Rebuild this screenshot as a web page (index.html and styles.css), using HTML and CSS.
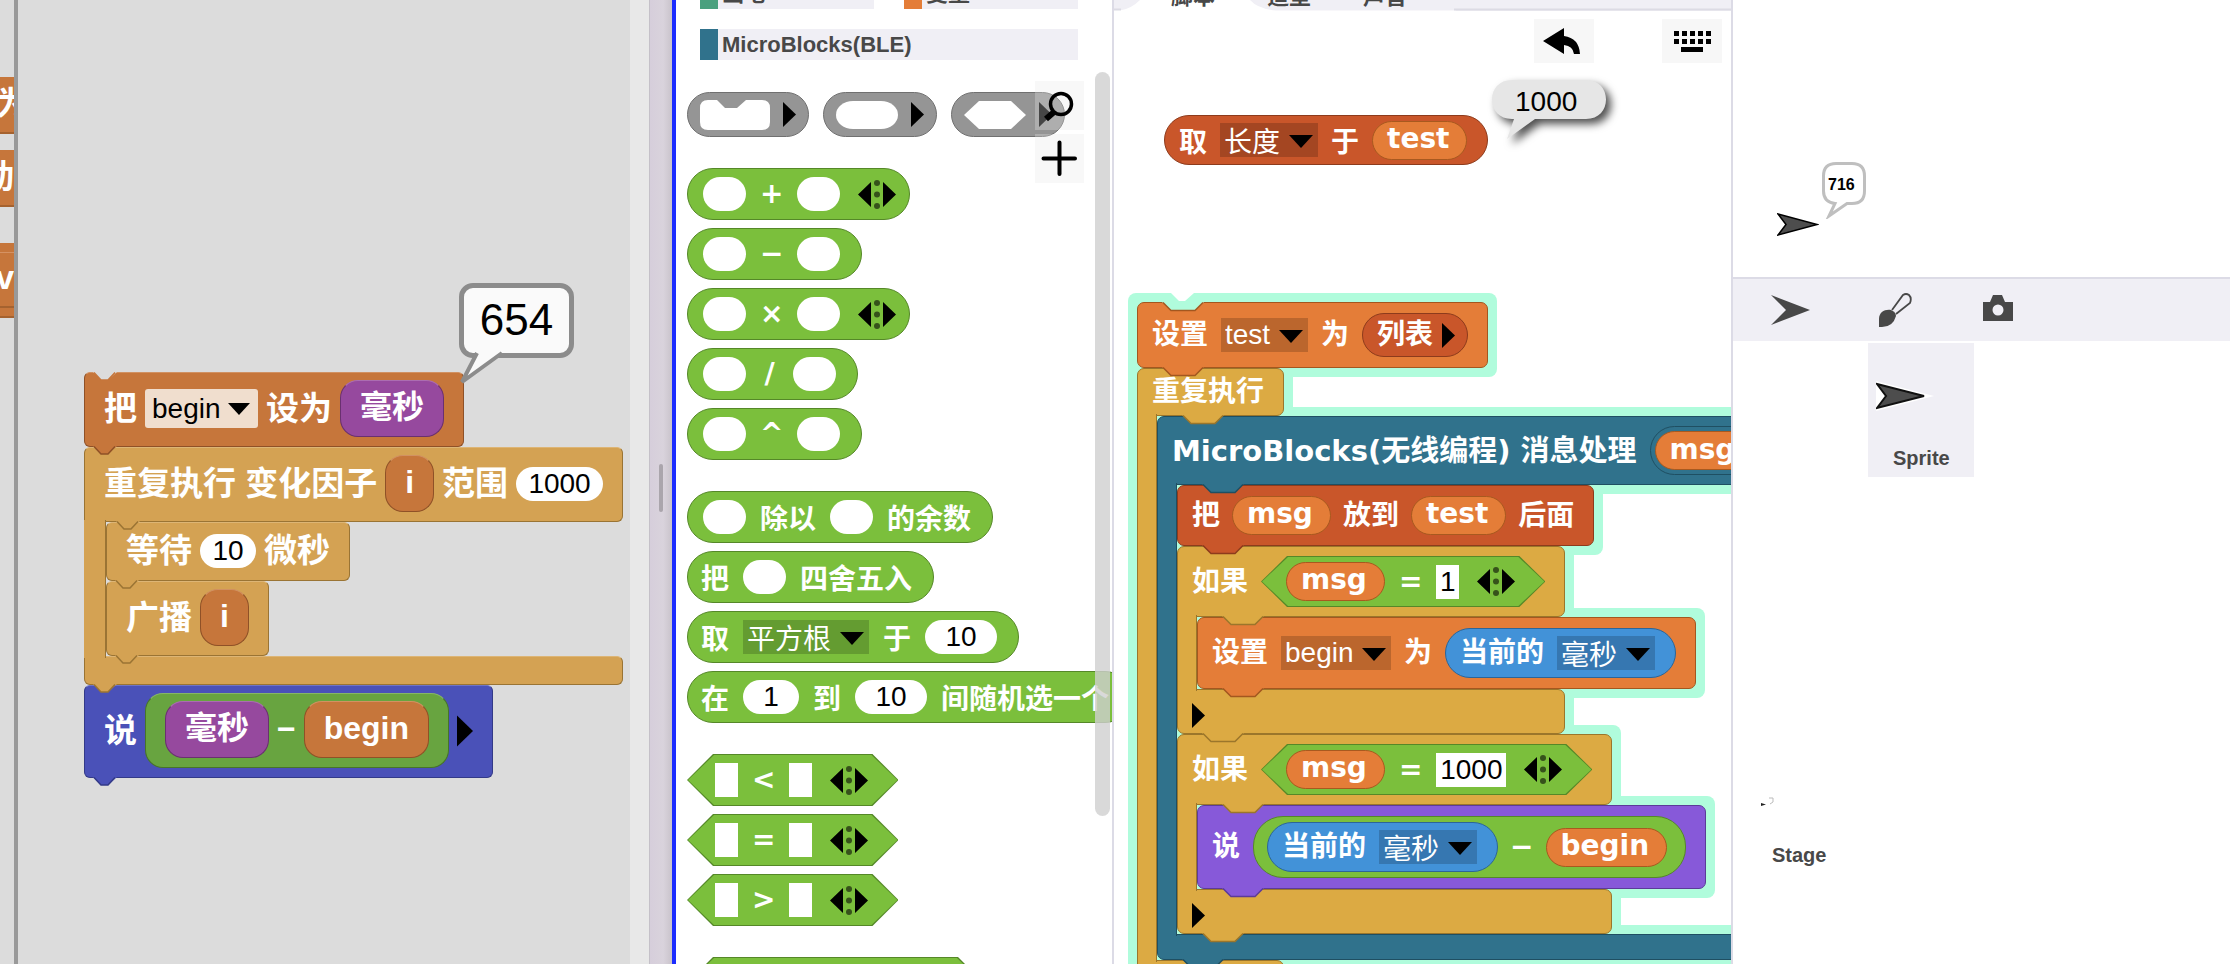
FILE: index.html
```html
<!DOCTYPE html>
<html lang="zh-CN">
<head>
<meta charset="utf-8">
<title>MicroBlocks BLE</title>
<link rel="stylesheet" href="styles.css">
</head>
<body>
<svg width="0" height="0" class="defs" aria-hidden="true">
  <symbol id="right" viewBox="0 0 13 25"><path d="M0 0L13 12.500L0 25Z"/></symbol>
  <symbol id="down" viewBox="0 0 24 13"><path d="M0 0H24L12 13Z"/></symbol>
  <symbol id="vary" viewBox="0 0 38 29"><path d="M13 2V27L0 14.500ZM25 2V27L38 14.500Z"/><g fill="#36521b"><circle cx="19" cy="3" r="3"/><circle cx="19" cy="14.500" r="3"/><circle cx="19" cy="26" r="3"/></g></symbol>
  <symbol id="tabwide" viewBox="0 0 42 10"><path d="M0 0H42L32 8.500H9Z"/><path d="M1 0.500L9 8.500H33L41 0.500" fill="none" class="edge"/></symbol>
  <symbol id="tabsmall" viewBox="0 0 24 9"><path d="M0 0H24L15 8H8Z"/><path d="M1 0.500L8 8H15L22 0.500" fill="none" class="edge"/></symbol>
</svg>
<div class="app">
  <aside class="strip">
    <div class="frag a"><span>为</span></div>
    <div class="frag b"><span>动</span></div>
    <div class="frag c3"><span>v</span></div>
  </aside>

  <section class="classic">
    <div class="script old">
      <div class="blk orange">
        <svg class="notch"><use href="#tabsmall"/></svg>
        <span>把</span><span class="dd light"><select aria-label="变量"><option>begin</option></select><svg><use href="#down"/></svg></span><span>设为</span><span class="rep violet">毫秒</span>
        <svg class="tab"><use href="#tabsmall"/></svg>
      </div>
      <div class="c yellow">
        <div class="blk head"><span>重复执行 变化因子</span><span class="rep orange">i</span><span>范围</span><input class="w87" value="1000" aria-label="范围"><svg class="tab"><use href="#tabsmall"/></svg></div>
        <div class="body"><div class="arm"></div><div class="stack">
          <div class="blk"><span>等待</span><input class="w56" value="10" aria-label="等待"><span>微秒</span><svg class="tab"><use href="#tabsmall"/></svg></div>
          <div class="blk"><span>广播</span><span class="rep orange">i</span><svg class="tab"><use href="#tabsmall"/></svg></div>
        </div></div>
        <div class="blk foot"><svg class="tab"><use href="#tabsmall"/></svg></div>
      </div>
      <div class="blk indigo"><span>说</span><span class="rep outer green"><span class="rep violet">毫秒</span><span>−</span><span class="rep orange">begin</span></span><svg class="arrow"><use href="#right"/></svg><svg class="tab"><use href="#tabsmall"/></svg></div>
    </div>
    <output class="value"><svg viewBox="0 0 48 34"><path d="M18 2L3 31L43 2" /></svg>654</output>
    <div class="rail"></div>
  </section>

  <div class="gutter"><i></i></div>

  <section class="palette">
    <nav class="cats">
      <button class="pen">画笔</button><button class="vars">变量</button><button class="ble">MicroBlocks(BLE)</button>
    </nav>
    <div class="rings">
      <div class="ring"><svg class="s1" viewBox="0 0 70 30"><path d="M8 0H17L25 8H37L46 0H62Q70 0 70 8V22Q70 30 62 30H8Q0 30 0 22V8Q0 0 8 0Z" fill="#fff"/></svg><svg class="arrow"><use href="#right"/></svg></div>
      <div class="ring"><svg class="s2" viewBox="0 0 62 28"><rect width="62" height="28" rx="17" ry="14" fill="#fff"/></svg><svg class="arrow"><use href="#right"/></svg></div>
      <div class="ring"><svg class="s2" viewBox="0 0 62 28"><path d="M0 14L15 0H47L62 14L47 28H15Z" fill="#fff"/></svg><svg class="arrow"><use href="#right"/></svg></div>
    </div>
    <div class="group">
      <div class="pill"><input aria-label="a"><b>+</b><input aria-label="b"><svg class="vary"><use href="#vary"/></svg></div>
      <div class="pill"><input aria-label="a"><b>−</b><input aria-label="b"></div>
      <div class="pill"><input aria-label="a"><b>×</b><input aria-label="b"><svg class="vary"><use href="#vary"/></svg></div>
      <div class="pill"><input aria-label="a"><b class="slash">/</b><input aria-label="b"></div>
      <div class="pill"><input aria-label="a"><b>^</b><input aria-label="b"></div>
    </div>
    <div class="group">
      <div class="pill"><input aria-label="a"><span>除以</span><input aria-label="b"><span>的余数</span></div>
      <div class="pill txt"><span>把</span><input aria-label="数"><span>四舍五入</span></div>
      <div class="pill txt"><span>取</span><span class="dd han"><select aria-label="函数"><option>平方根</option></select><svg><use href="#down"/></svg></span><span>于</span><input class="w72" value="10" aria-label="数"></div>
      <div class="pill txt"><span>在</span><input class="w56" value="1" aria-label="从"><span>到</span><input class="w72" value="10" aria-label="至"><span>间随机选一个</span></div>
    </div>
    <div class="group">
      <div class="hex"><input class="box" aria-label="a"><b>&lt;</b><input class="box" aria-label="b"><svg class="vary"><use href="#vary"/></svg></div>
      <div class="hex"><input class="box" aria-label="a"><b>=</b><input class="box" aria-label="b"><svg class="vary"><use href="#vary"/></svg></div>
      <div class="hex"><input class="box" aria-label="a"><b>&gt;</b><input class="box" aria-label="b"><svg class="vary"><use href="#vary"/></svg></div>
    </div>
    <div class="group"><div class="hex long"></div></div>
    <div class="tools">
      <button aria-label="搜索"><svg viewBox="0 0 49 49"><circle cx="26" cy="23" r="10.500" fill="none" stroke="#000" stroke-width="3.500"/><path d="M19 31L11 38" stroke="#000" stroke-width="6"/></svg></button>
      <button aria-label="新建积木"><svg viewBox="0 0 49 49"><path d="M8.500 24.500H40M24.500 8.500V40" stroke="#000" stroke-width="4" stroke-linecap="round"/></svg></button>
    </div>
    <div class="scroll"></div>
  </section>

  <section class="scripts">
    <nav class="tabs">
      <svg viewBox="0 0 617 11" preserveAspectRatio="none"><path d="M0 10H8Q18 8 26 0H136Q144 9 162 10.500H342V11H0Z" fill="#fff"/><path d="M0 9.500H7M340 9.500H617" stroke="#dcdbe4" stroke-width="2"/></svg>
      <button>脚本</button><button>造型</button><button>声音</button>
    </nav>
    <div class="actions">
      <button aria-label="撤销"><svg viewBox="0 0 60 44"><path d="M9 22L30 9V17Q45 19 46 35H40Q39 27 30 26V35Z"/></svg></button>
      <button aria-label="键盘"><svg viewBox="0 0 60 44"><path d="M12 14.500H49M12 22.500H49" stroke="#000" stroke-width="5" stroke-dasharray="5 3"/><path d="M19 28H41V33H19Z"/></svg></button>
    </div>

    <div class="rep red probe"><span>取</span><span class="dd han"><select aria-label="属性"><option>长度</option></select><svg><use href="#down"/></svg></span><span>于</span><span class="chip">test</span></div>
    <output class="result"><svg viewBox="0 0 114 60"><path d="M20 0H94C107 0 114 9 114 19.500C114 30 107 39 94 39H43L15 59L22 39H20C7 39 0 30 0 19.500C0 9 7 0 20 0Z"/></svg>1000</output>

    <div class="script new">
      <div class="blk amber">
        <svg class="cut" viewBox="0 0 42 18"><path d="M9 0H32L23 8H17Z" fill="#fff"/><path d="M0 9L9 17.500H33L42 9Z" fill="#b0fcdc"/><path d="M1 9.500L9 17.500H33L41 9.500" fill="none" class="edge"/></svg>
        <span>设置</span><span class="dd"><select aria-label="变量"><option>test</option></select><svg><use href="#down"/></svg></span><span>为</span><span class="rep red list"><span>列表</span><svg class="arrow"><use href="#right"/></svg></span>
        <svg class="tab"><use href="#tabwide"/></svg>
      </div>
      <div class="c gold">
        <div class="blk head"><span>重复执行</span><svg class="tab"><use href="#tabwide"/></svg></div>
        <div class="body"><div class="arm"></div><div class="stack">
          <div class="c teal">
            <div class="blk head"><span class="title">MicroBlocks(无线编程) 消息处理</span><span class="port"><span class="chip">msg</span></span><svg class="tab"><use href="#tabwide"/></svg></div>
            <div class="body"><div class="arm"></div><div class="stack">
              <div class="blk red"><span>把</span><span class="chip">msg</span><span>放到</span><span class="chip">test</span><span>后面</span><svg class="tab"><use href="#tabwide"/></svg></div>
              <div class="c gold">
                <div class="blk head"><span>如果</span><span class="hex"><span class="chip">msg</span><b>=</b><input class="box" value="1" aria-label="值"><svg class="vary"><use href="#vary"/></svg></span><svg class="tab"><use href="#tabwide"/></svg></div>
                <div class="body"><div class="arm"></div><div class="stack">
                  <div class="blk amber"><span>设置</span><span class="dd"><select aria-label="变量"><option>begin</option></select><svg><use href="#down"/></svg></span><span>为</span><span class="rep sky"><span>当前的</span><span class="dd han"><select aria-label="单位"><option>毫秒</option></select><svg><use href="#down"/></svg></span></span><svg class="tab"><use href="#tabwide"/></svg></div>
                </div></div>
                <div class="blk foot"><svg class="arrow"><use href="#right"/></svg><svg class="tab"><use href="#tabwide"/></svg></div>
              </div>
              <div class="c gold">
                <div class="blk head"><span>如果</span><span class="hex"><span class="chip">msg</span><b>=</b><input class="box w70" value="1000" aria-label="值"><svg class="vary"><use href="#vary"/></svg></span><svg class="tab"><use href="#tabwide"/></svg></div>
                <div class="body"><div class="arm"></div><div class="stack">
                  <div class="blk purple"><span>说</span><span class="rep lime"><span class="rep sky"><span>当前的</span><span class="dd han"><select aria-label="单位"><option>毫秒</option></select><svg><use href="#down"/></svg></span></span><b>−</b><span class="chip">begin</span></span><svg class="tab"><use href="#tabwide"/></svg></div>
                </div></div>
                <div class="blk foot"><svg class="arrow"><use href="#right"/></svg><svg class="tab"><use href="#tabwide"/></svg></div>
              </div>
            </div></div>
            <div class="blk foot thin"><svg class="tab"><use href="#tabwide"/></svg></div>
          </div>
        </div></div>
        <div class="blk foot"></div>
      </div>
    </div>
  </section>

  <section class="right">
    <div class="stage">
      <svg class="sprite" viewBox="0 0 42 23"><path d="M1 1L40 11.500L1 22L9 11.500Z" fill="#4d4d4d" stroke="#000" stroke-width="1.500"/></svg>
      <output class="say"><svg viewBox="0 0 44 57"><path d="M14 1.500H30Q42.500 1.500 42.500 14V29Q42.500 41.500 30 41.500H25L7 54L13 41.500Q1.500 40 1.500 29V14Q1.500 1.500 14 1.500Z" fill="#fff" stroke="#bfbfbf" stroke-width="3"/></svg>716</output>
    </div>
    <div class="bar">
      <button aria-label="新建角色"><svg viewBox="0 0 40 36"><path d="M0 3L39 18L0 33L15 18Z" fill="#484848"/></svg></button>
      <button aria-label="绘制角色"><svg viewBox="0 0 40 36"><path d="M4 35V27C4 20 10 17 16 18Q21 20 21 24Q18 35 7 35Z" fill="#484848"/><path d="M17 18L28 3Q31 1 34 3Q37 6 35 11L21 22" fill="none" stroke="#484848" stroke-width="1.800"/></svg></button>
      <button aria-label="相机"><svg viewBox="0 0 40 36"><path fill-rule="evenodd" d="M4 10H11L14 3H23L26 10H34V29H4ZM19 12.500A5.500 5.500 0 1 0 19 23.500A5.500 5.500 0 1 0 19 12.500Z" fill="#484848"/></svg></button>
    </div>
    <div class="corral">
      <div class="stageicon"><svg viewBox="0 0 14 12"><path d="M0 6L5 7.500L0 9Z" fill="#222"/><path d="M8 1H12V5L9 7" fill="none" stroke="#bbb"/></svg><span>Stage</span></div>
      <div class="tile"><svg viewBox="0 0 60 32"><path d="M0 1L58 16L0 31Z" fill="#fff"/><path d="M1 4L48 16L1 28L10 16Z" fill="#4d4d4d" stroke="#111" stroke-width="2"/></svg><span>Sprite</span></div>
    </div>
  </section>
</div>
</body>
</html>
```
FILE: styles.css
```css
* { box-sizing: border-box; }
body { margin: 0; background: #fff; }
button, input, select { font: inherit; color: inherit; border: 0; padding: 0; margin: 0; border-radius: 0; }
svg { display: block; flex: none; }
.defs { position: absolute; }
.edge { stroke: var(--d); stroke-width: 1.500; }
.app {
  display: grid;
  grid-template-columns: 18px 632fr 22px 440fr 619fr 499fr;
  height: 100vh;
  overflow: hidden;
  font-family: "Liberation Sans", "Noto Sans CJK SC", sans-serif;
}
.app > * { position: relative; overflow: hidden; min-width: 0; }

/* colours of the block families: face and edge */
.orange { --c: #c6763b; --d: #8f5127; }
.violet { --c: #96499e; --d: #6a3070; }
.yellow { --c: #d4a253; --d: #9a7434; }
.indigo { --c: #4a51b8; --d: #333a88; }
.green { --c: #68a440; --d: #477528; }
.red { --c: #c9562a; --d: #8d3b1c; }
.amber { --c: #e47d38; --d: #a3571f; }
.gold { --c: #dcaa43; --d: #9b762b; }
.teal { --c: #30728c; --d: #1f4f62; }
.purple { --c: #8759d9; --d: #5c3b99; }
.sky { --c: #4292d8; --d: #2c6598; }
.lime, .pill, .hex { --c: #7bbf3c; --d: #558828; }

/* left strip */
.strip { background: #dcdcdc; border-right: 4px solid #999; padding-top: 77px; }
.frag { height: 57px; background: #c6763b; border-bottom: 2px solid #a5622f; color: #fff; font: bold 33px/54px "Liberation Sans", "Noto Sans CJK SC", sans-serif; display: flex; justify-content: flex-end; }
.frag.a { justify-content: flex-start; }
.frag.a span { margin-left: -4px; }
.frag.b { margin-top: 16px; }
.frag.c3 { margin-top: 36px; height: 75px; line-height: 70px; box-shadow: inset 0 9px #c6763b, inset 0 10px #d59263, inset 0 -8px #c6763b, inset 0 -10px #a5622f; }

/* shared block parts */
.script { position: absolute; isolation: isolate; color: #fff; font-weight: bold; white-space: nowrap; display: flex; flex-direction: column; align-items: flex-start; }
.blk { position: relative; display: flex; align-items: center; background: var(--c); border: 1px solid var(--d); }
.blk > .tab, .notch, .cut { position: absolute; z-index: 2; fill: var(--c); overflow: visible; }
.c { display: grid; width: max-content; }
.body { display: flex; width: 0; }
.arm { flex: none; background: var(--c); border: solid var(--d); border-width: 0 1px; margin: -2px 0; position: relative; z-index: 1; }
.stack { flex: none; display: flex; flex-direction: column; align-items: flex-start; }
.head { border-bottom-left-radius: 0 !important; }
.foot { border-top-left-radius: 0 !important; }
.rep { display: flex; align-items: center; background: var(--c); border: 1px solid var(--d); }
.arrow { width: 13px; height: 25px; fill: #000; }
.vary { width: 38px; height: 29px; fill: #000; }
input { background: #fff; color: #000; text-align: center; height: 34px; width: 43px; border-radius: 17px; font: 28px/34px "Liberation Sans", sans-serif; flex: none; }
input.w56 { width: 56px; }
input.w72 { width: 72px; }
input.w87 { width: 87px; }
.dd { position: relative; display: flex; flex: none; }
.dd select { appearance: none; background: #0000002e; color: #fff; height: 34px; padding: 0 37px 0 4px; font: 28px/34px "Liberation Sans", "Noto Sans CJK SC", sans-serif; }
.dd svg { position: absolute; right: 5px; top: 12px; width: 24px; height: 13px; fill: #000; pointer-events: none; }
.han select { padding-top: 3px; }

/* classic theme */
.classic { background: #dcdcdc; }
.rail { position: absolute; inset: 0 0 0 auto; width: 20px; background: #e8e8e8; border-right: 1px solid #c4c0c8; }
.old { left: 66px; top: 372px; font-size: 33px; line-height: 41px; }
.old .blk { padding: 7px 19px 9px; gap: 8px; border-radius: 6px; border-top-color: color-mix(in srgb, var(--c) 80%, #fff); }
.old .rep { padding: 6px 19px 8px; border-radius: 18px; border-top-color: color-mix(in srgb, var(--c) 80%, #fff); line-height: 41px; font-size: 32px; }
.old .outer { padding: 7px 19px 9px; gap: 8px; }
.old .tab, .old .notch { left: 8px; top: 100%; width: 24px; height: 9px; }
.old .notch { top: -1px; fill: #dcdcdc; --d: #c6763b; }
.old .head > .tab { left: 31px; }
.old .arm { width: 22px; border-left-width: 0; }
.old .foot { height: 29px; padding: 0; }
.old .arrow { width: 16px; height: 32px; }
.old .light select { background: #f0dece; color: #000; height: 39px; padding: 0 37px 0 7px; border-radius: 3px; }
.old .light svg { width: 22px; height: 16px; right: 8px; top: 12px; }
.old input { font-size: 28px; }
.value { position: absolute; left: 441px; top: 283px; width: 115px; height: 75px; border: 5px solid #8c8c8c; border-radius: 14px; background: #fafafa; font-size: 44px; line-height: 63px; text-align: center; }
.value svg { position: absolute; left: -5px; top: 63px; width: 48px; height: 34px; fill: #fafafa; stroke: #8c8c8c; stroke-width: 4; }

.gutter { background: linear-gradient(90deg, #d6cedb, #d9d3dc 60%, #c9c3cb); display: flex; align-items: center; justify-content: center; padding-top: 12px; }
.gutter i { width: 4px; height: 48px; background: #aaa5ac; border-radius: 2px; }

/* palette */
.palette { border-left: 4px solid #1c2cff; background: #fff; padding-left: 11px; color: #fff; white-space: nowrap; }
.cats { display: grid; grid-template-columns: 174px 174px; gap: 20px 30px; margin: -22px 0 32px 13px; }
.cats button { height: 31px; background: #f0eff5; border-left: 18px solid #4aa07e; padding-left: 4px; font: bold 22px/31px "Liberation Sans", "Noto Sans CJK SC", sans-serif; color: #484848; text-align: left; }
.cats .vars { border-color: #e47d38; }
.cats .ble { border-color: #30728c; grid-column: 1 / 3; }
.rings { display: flex; gap: 14px; }
.ring { display: flex; align-items: center; gap: 13px; height: 45px; padding: 0 12px; border: 1px solid #707070; border-radius: 23px; background: #959595; }
.s1 { width: 70px; height: 30px; }
.s2 { width: 62px; height: 28px; }
.group { display: flex; flex-direction: column; align-items: flex-start; gap: 8px; margin-top: 31px; font: bold 28px/34px "Noto Sans CJK SC", sans-serif; }
.pill { display: flex; align-items: center; gap: 14px; height: 52px; padding: 0 21px 0 15px; border-radius: 26px; background: var(--c); border: 1px solid var(--d); }
.pill.txt { padding-left: 13px; }
.pill .vary { margin: 0 -8px 0 4px; }
.palette b, .scripts b { font: bold 28px/34px "DejaVu Sans", sans-serif; }
.palette .slash { width: 19px; text-align: center; }
.hex { position: relative; isolation: isolate; display: flex; align-items: center; gap: 14px; height: 52px; padding: 0 30px 0 28px; background: var(--d); clip-path: polygon(0 50%, 26px 0, calc(100% - 26px) 0, 100% 50%, calc(100% - 26px) 100%, 26px 100%); }
.hex::before { content: ""; position: absolute; z-index: -1; inset: 1px; background: var(--c); clip-path: polygon(0 50%, 26px 0, calc(100% - 26px) 0, 100% 50%, calc(100% - 26px) 100%, 26px 100%); }
.hex .vary { margin-left: 4px; }
.hex .box { width: 23px; border-radius: 0; }
.hex .box.w70 { width: 70px; }
.long { width: 297px; }
.tools { position: absolute; right: 28px; top: 81px; display: grid; gap: 4px; }
.tools button { width: 49px; height: 49px; background: #e8e8e84d; }
.tools svg { width: 49px; height: 49px; }
.scroll { position: absolute; right: 2px; top: 72px; width: 15px; height: 744px; border-radius: 8px; background: #d0d0d0cc; }

/* scripting area */
.scripts { border: solid #dcdbe6; border-width: 0 0 0 2px; background: #fff; }
.tabs { position: relative; height: 11px; background: #f0eff5; display: flex; align-items: flex-end; gap: 52px; padding-left: 57px; overflow: hidden; }
.tabs svg { position: absolute; inset: 0; width: 100%; height: 11px; }
.tabs button { position: relative; background: none; margin-bottom: 3px; font: bold 22px/28px "Noto Sans CJK SC", sans-serif; color: #484848; }
.actions { display: flex; justify-content: flex-end; gap: 68px; padding: 8px 9px 0 0; }
.actions button { width: 60px; height: 44px; background: #f7f7f7; }
.actions svg { width: 60px; height: 44px; }
.scripts .rep, .new { font-family: "DejaVu Sans", "Noto Sans CJK SC", sans-serif; }
.scripts .rep { gap: 13px; height: 50px; padding: 0 20px 0 14px; border-radius: 26px; }
.chip { height: 39px; padding: 0 17px 0 14px; border: 1px solid #a8591f; border-radius: 20px; background: #e47d38; font: bold 28px/34px "DejaVu Sans", sans-serif; }
.probe { position: absolute; left: 50px; top: 115px; color: #fff; font-size: 28px; font-weight: bold; white-space: nowrap; }
.result { position: absolute; left: 378px; top: 80px; width: 114px; height: 39px; padding-left: 23px; font-size: 28px; line-height: 44px; isolation: isolate; }
.result svg { position: absolute; z-index: -1; left: 0; top: 0; width: 114px; height: 60px; fill: #e6e6e6; overflow: visible; filter: drop-shadow(5px 5px 4px #000000b0); }
.new { left: 23px; top: 302px; font-size: 28px; line-height: 28px; }
.new .title { font-size: 29px; }
.new .blk { padding: 10px 19px 10px 14px; gap: 13px; border-radius: 7px; }
.new .head { padding-top: 9px; padding-bottom: 9px; }
.new .red { gap: 12px; }
.new .blk::before { content: ""; position: absolute; z-index: -1; inset: -10px; border-radius: 8px; background: #b0fcdc; }
.new .arm { width: 20px; }
.new > .c > .body::before { content: ""; position: absolute; z-index: -1; left: -9px; width: 20px; top: 70px; bottom: 0; background: #b0fcdc; }
.new .tab, .new .cut { left: 24px; top: 100%; width: 42px; height: 10px; }
.new .cut { top: -10px; height: 18px; }
.new .head > .tab { left: 44px; }
.new .foot { height: 45px; }
.new .foot > .tab { left: 24px; }
.new .foot.thin { height: 26px; }
.new .foot .arrow { margin-top: 8px; }
.scripts .list { height: 44px; gap: 9px; padding-right: 12px; }
.scripts .lime { height: 62px; padding: 0 18px 0 13px; border-radius: 30px; gap: 12px; }
.new .hex { padding-left: 25px; height: 51px; }
.port { padding: 4px; border: 1px solid #1f4f62; border-radius: 25px; display: flex; }
.port .chip { line-height: 36px; }

/* stage and corral */
.right { display: flex; flex-direction: column; border-left: 2px solid #dcdbe6; }
.stage { position: relative; height: 279px; border-bottom: 2px solid #dcdbe6; }
.sprite { position: absolute; left: 44px; top: 213px; width: 42px; height: 23px; }
.say { position: absolute; left: 89px; top: 162px; width: 44px; height: 57px; padding-left: 6px; font: bold 16px/46px "Liberation Sans", sans-serif; isolation: isolate; }
.say svg { position: absolute; z-index: -1; inset: 0; width: 44px; height: 57px; }
.bar { height: 62px; background: #f0eff5; display: flex; align-items: center; gap: 64px; padding-left: 38px; }
.bar button { background: none; }
.bar svg { width: 40px; height: 36px; }
.corral { flex: 1; display: flex; padding-top: 2px; font: bold 20px/24px "Liberation Sans", sans-serif; color: #484848; }
.stageicon { width: 135px; padding: 454px 0 0 28px; display: flex; flex-direction: column; gap: 34px; }
.stageicon svg { width: 14px; height: 12px; }
.stageicon span { padding-left: 11px; }
.tile { width: 106px; height: 134px; background: #f0eff5; padding: 37px 0 0 8px; display: flex; flex-direction: column; gap: 34px; }
.tile svg { width: 60px; height: 32px; }
.tile span { padding-left: 17px; }
```
